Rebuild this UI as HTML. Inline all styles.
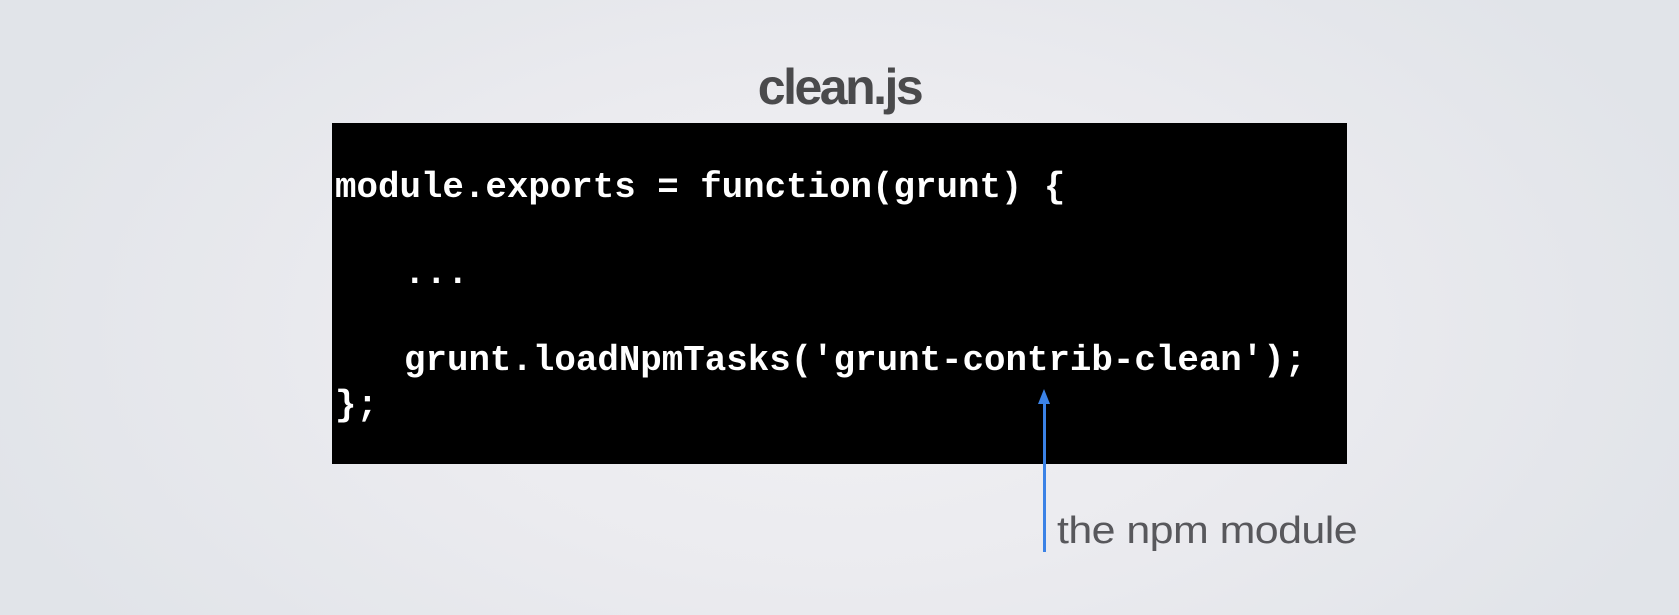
<!DOCTYPE html>
<html><head><style>
html,body{margin:0;padding:0}
body{width:1679px;height:615px;position:relative;overflow:hidden;
background:radial-gradient(ellipse 900px 500px at 840px 330px,#f1f1f4 0%,#ebebef 50%,#e1e4e9 100%);}
.title{position:absolute;left:0;width:1679px;top:58px;text-align:center;font:bold 50px "Liberation Sans",sans-serif;color:#4a4a4c;letter-spacing:-2.5px}
.box{position:absolute;left:332px;top:123px;width:1015px;height:341px;background:#000}
.code{position:absolute;left:335px;margin:0;font:bold 35.8px/1 "Liberation Mono",monospace;color:#fff;white-space:pre}
.arrow{position:absolute;left:1043px;top:396px;width:3px;height:156px;background:#3b82e6}
.head{position:absolute;left:1038px;top:389px;width:0;height:0;border-left:6.5px solid transparent;border-right:6.5px solid transparent;border-bottom:15px solid #3b82e6}
.lbl{position:absolute;left:1057px;top:510px;font:38px "Liberation Sans",sans-serif;color:#58585c;transform:scaleX(1.13);transform-origin:left top;letter-spacing:-0.5px}
</style></head><body>
<div class="title">clean.js</div>
<div class="box"></div>
<div class="code" style="top:170px">module.exports = function(grunt) {</div>
<div class="code" style="top:256px;left:404px">...</div>
<div class="code" style="top:343px;left:404px">grunt.loadNpmTasks('grunt-contrib-clean');</div>
<div class="code" style="top:388px">};</div>
<div class="arrow"></div>
<div class="head"></div>
<div class="lbl">the npm module</div>
</body></html>
